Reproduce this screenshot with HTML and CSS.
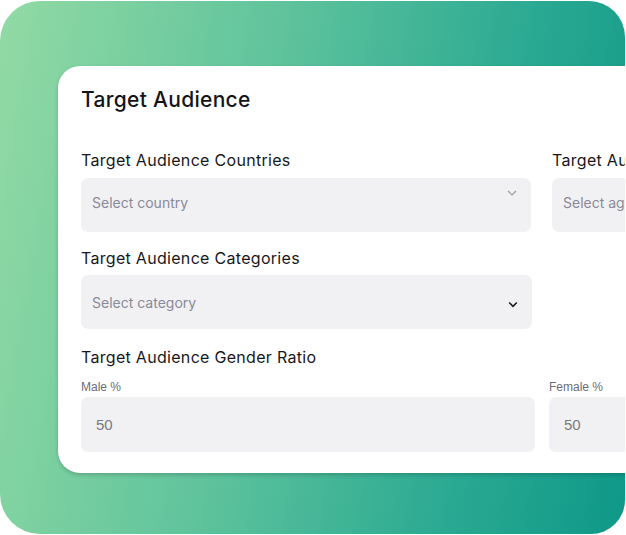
FILE: index.html
```html
<!DOCTYPE html>
<html lang="en">
<head>
<meta charset="utf-8">
<title>Target Audience</title>
<link rel="stylesheet" href="styles.css">
</head>
<body>
<div class="panel">
  <div class="card">
    <h1 class="title">Target Audience</h1>
    <div class="row-top">
      <div class="field">
        <div class="label">Target Audience Countries</div>
        <div class="select">
          <span class="placeholder placeholder-up">Select country</span>
          <svg class="chev chev-light" width="10" height="6" viewBox="0 0 10 6"><path d="M1 1l4 4 4-4" fill="none" stroke="#9a9aa6" stroke-width="1.1"/></svg>
        </div>
      </div>
      <div class="field">
        <div class="label">Target Audience Age</div>
        <div class="select">
          <span class="placeholder placeholder-up">Select age range</span>
        </div>
      </div>
    </div>
    <div class="field field-cat">
      <div class="label">Target Audience Categories</div>
      <div class="select">
        <span class="placeholder">Select category</span>
        <svg class="chev chev-dark" width="10" height="7" viewBox="0 0 10 7"><path d="M1.2 1.5l3.8 3.8 3.8-3.8" fill="none" stroke="#1b1b22" stroke-width="1.6"/></svg>
      </div>
    </div>
    <div class="label label-gender">Target Audience Gender Ratio</div>
    <div class="row-gender">
      <div class="gfield">
        <div class="small-label">Male %</div>
        <div class="input">50</div>
      </div>
      <div class="gfield">
        <div class="small-label">Female %</div>
        <div class="input">50</div>
      </div>
    </div>
  </div>
</div>
</body>
</html>
```
FILE: styles.css
```css
html, body {
  margin: 0;
  padding: 0;
  background: #ffffff;
}
body {
  width: 626px;
  height: 535px;
  overflow: hidden;
  padding-top: 1px;
  box-sizing: border-box;
}
.panel {
  width: 625px;
  height: 533px;
  border-radius: 40px 36px 34px 40px;
  background: linear-gradient(100deg, #92daa4 0%, #5fc39c 40%, #2aa992 75%, #0e9888 100%);
  overflow: hidden;
  padding: 65px 0 0 58px;
  box-sizing: border-box;
}
.card {
  width: 968px;
  height: 407px;
  background: #ffffff;
  border-radius: 22px;
  box-shadow: 0 2px 4px rgba(0, 0, 0, 0.18);
  padding: 22px 0 0 23px;
  box-sizing: border-box;
  font-family: Inter, "Noto Sans", sans-serif;
  color: #141418;
}
.title {
  margin: 0;
  font-size: 21px;
  line-height: 24px;
  font-weight: 500;
  letter-spacing: 0.3px;
}
.row-top {
  display: grid;
  grid-template-columns: 450px 450px;
  column-gap: 21px;
  margin-top: 38px;
}
.label {
  font-size: 16px;
  line-height: 20px;
  font-weight: 400;
  letter-spacing: 0.3px;
  color: #18181c;
}
.select {
  margin-top: 8px;
  height: 54px;
  background: #f1f1f3;
  border-radius: 7px;
  display: flex;
  align-items: center;
  justify-content: space-between;
  padding: 0 14px 0 11px;
  box-sizing: border-box;
}
.placeholder {
  font-size: 14px;
  color: #8a8a98;
  letter-spacing: 0;
}
.placeholder-up {
  margin-bottom: 6px;
}
.chev-light {
  align-self: flex-start;
  margin-top: 12px;
}
.chev-dark {
  margin-top: 5px;
}
.field-cat {
  width: 451px;
  margin-top: 16px;
}
.field-cat .select {
  margin-top: 7px;
}
.label-gender {
  margin-top: 18px;
}
.row-gender {
  display: grid;
  grid-template-columns: 454px 454px;
  column-gap: 14px;
  margin-top: 13px;
}
.small-label {
  font-family: "Liberation Sans", Arial, sans-serif;
  font-size: 12px;
  line-height: 14px;
  color: #6c6c78;
}
.input {
  margin-top: 3px;
  height: 55px;
  background: #f1f1f3;
  border-radius: 7px;
  display: flex;
  align-items: center;
  padding-left: 15px;
  font-family: "Liberation Sans", Arial, sans-serif;
  font-size: 15px;
  color: #7a7a84;
}
```
